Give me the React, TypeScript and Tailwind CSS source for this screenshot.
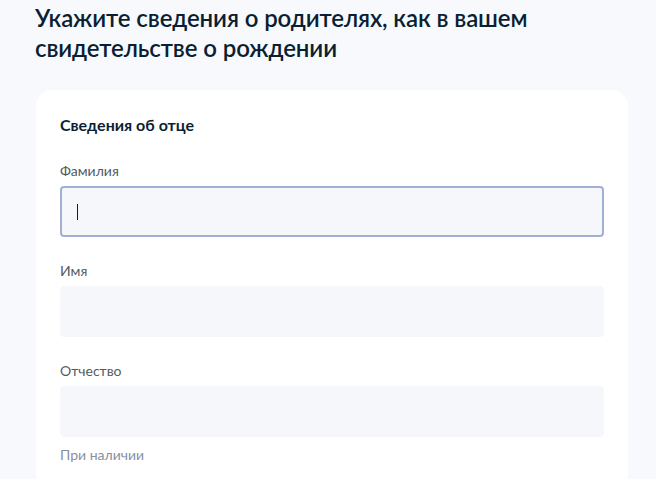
import React from "react";

function Field({ label, focused, hint }: { label: string; focused?: boolean; hint?: string }) {
  return (
    <div className="flex flex-col">
      <div className="text-[14px] leading-[20px] text-[#535b63]">{label}</div>
      <div
        className={
          focused
            ? "mt-[5px] h-[51px] rounded-[4px] border-2 border-[#a3b0d6] bg-[#f5f7fa] flex items-center pl-[15px]"
            : "mt-[5px] h-[51px] rounded-[4px] border border-[#f5f7fa] bg-[#f5f7fa]"
        }
      >
        {focused && <span className="block w-[1px] h-[16px] bg-[#0b1f33]" />}
      </div>
      {hint && <div className="mt-[8px] text-[14px] leading-[20px] text-[#86909c]">{hint}</div>}
    </div>
  );
}

export default function App() {
  return (
    <div
      className="w-[656px] h-[479px] overflow-hidden bg-[#f8f9fc]"
      style={{ fontFamily: "Lato, 'Noto Sans', sans-serif" }}
    >
      <div className="pl-[35px] pt-[3px] pr-[20px]">
        <h1 className="text-[24px] leading-[30px] font-semibold tracking-[-0.1px] text-[#0b1f33]">
          Укажите сведения о родителях, как в вашем
          <br />
          свидетельстве о рождении
        </h1>
      </div>
      <div className="ml-[36px] mt-[27px] w-[592px] rounded-[16px] bg-white px-[24px] pt-[23px] pb-[24px]">
        <div className="text-[16px] leading-[24px] font-bold text-[#0b1f33]">Сведения об отце</div>
        <div className="mt-[24px] flex flex-col gap-[24px]">
          <Field label="Фамилия" focused />
          <Field label="Имя" />
          <Field label="Отчество" hint="При наличии" />
        </div>
      </div>
    </div>
  );
}
